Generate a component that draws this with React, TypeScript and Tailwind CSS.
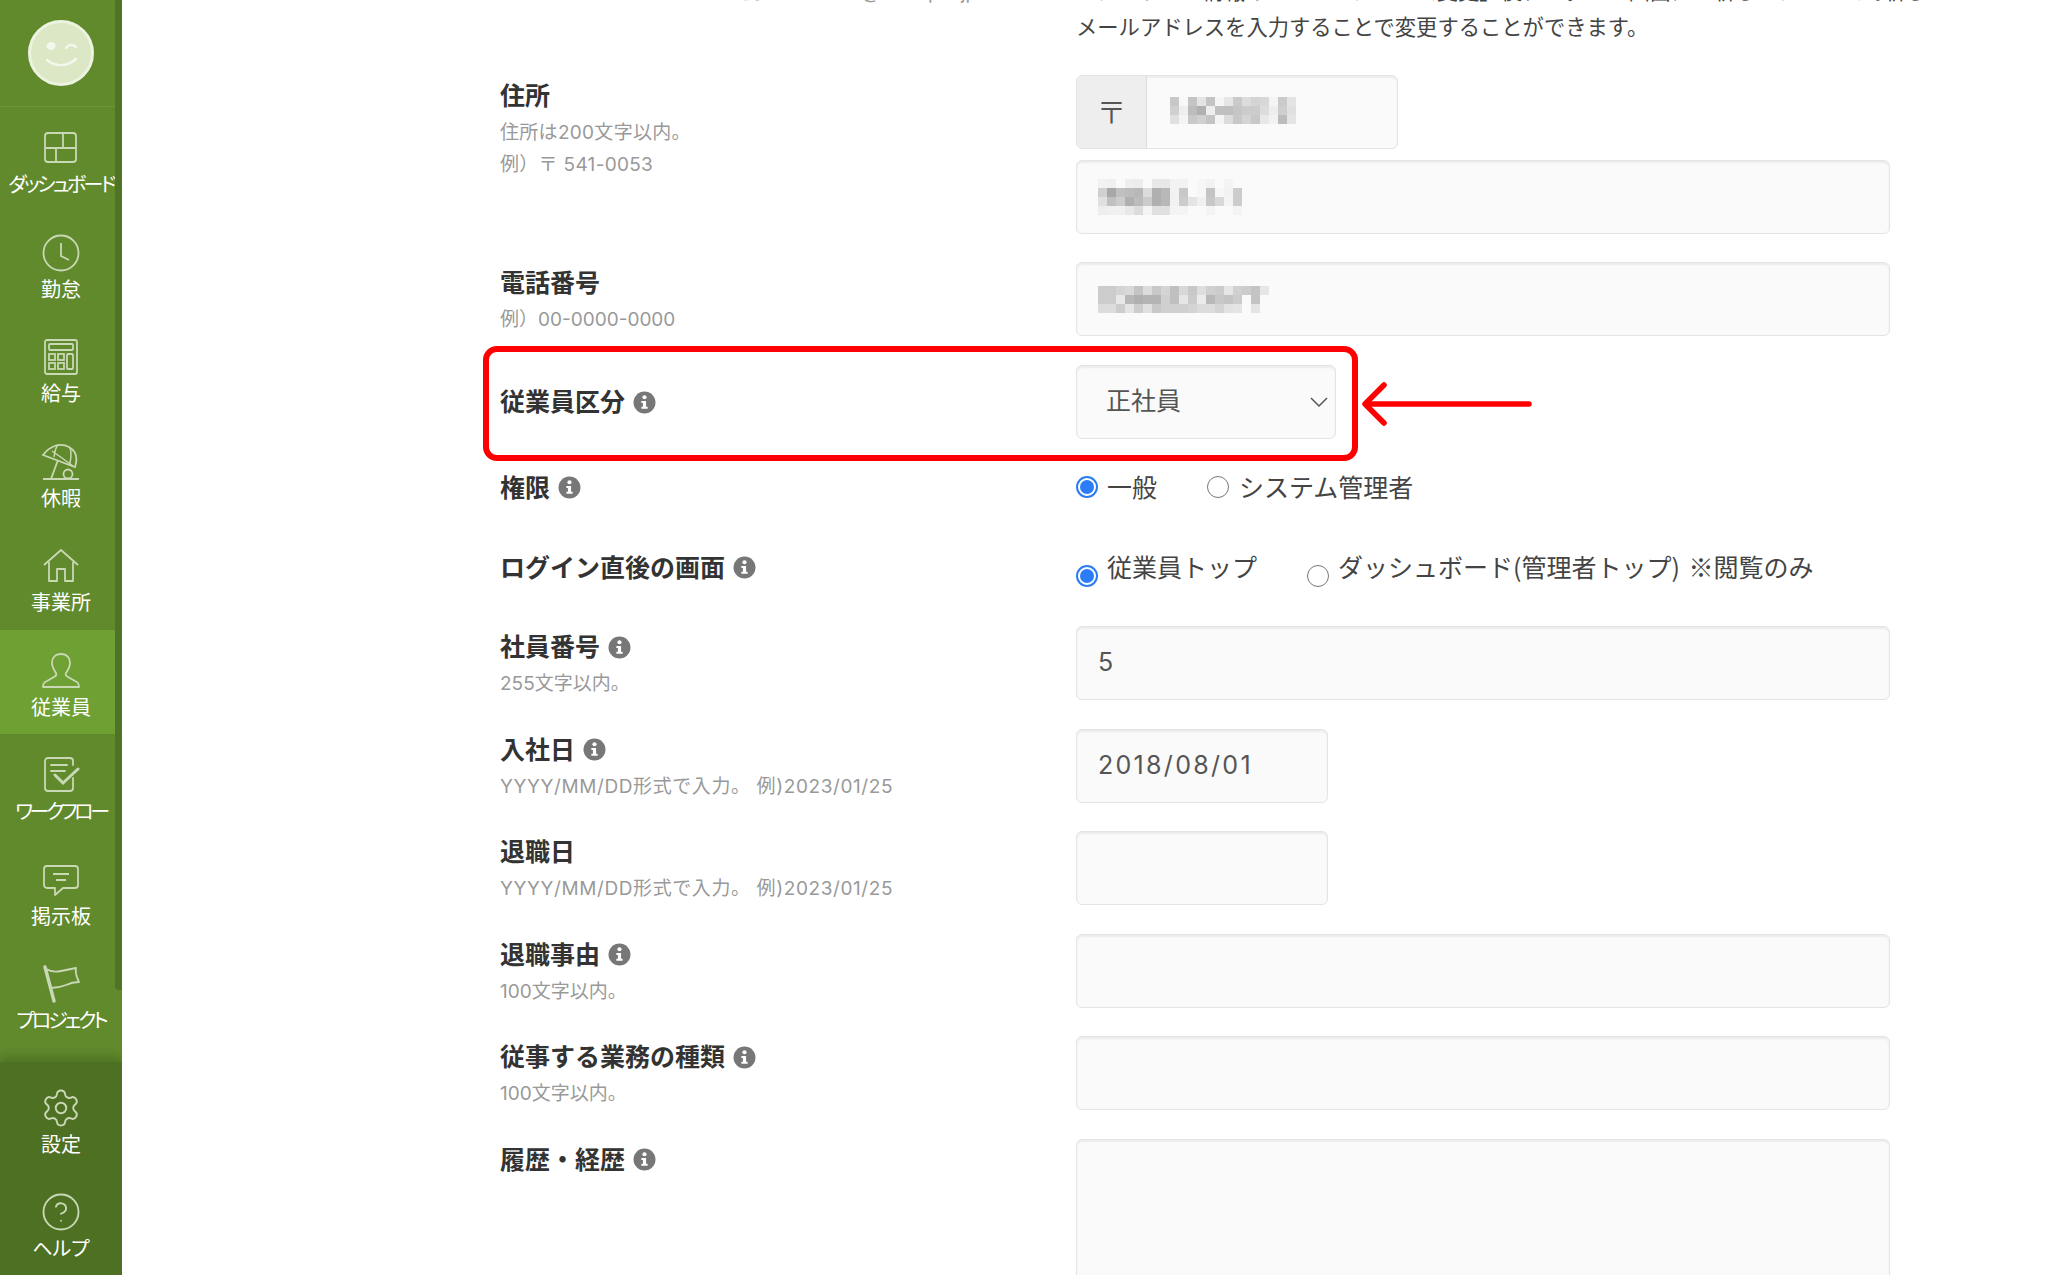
import React from "react";
import { Settings, CircleHelp } from "lucide-react";

const iconCls = "w-[38px] h-[38px] text-[#c9d8b5]";

const Dash = () => (
  <svg viewBox="0 0 38 38" className={iconCls} fill="none" stroke="currentColor" strokeWidth="1.8">
    <rect x="3" y="4" width="31" height="29" rx="3" />
    <path d="M3 19h31M21 4v15M14 19v14" />
  </svg>
);
const Clock = () => (
  <svg viewBox="0 0 38 38" className={iconCls} fill="none" stroke="currentColor" strokeWidth="1.8">
    <circle cx="19" cy="19" r="17.5" />
    <path d="M19 9v13l8 4" />
  </svg>
);
const Calc = () => (
  <svg viewBox="0 0 38 38" className={iconCls} fill="none" stroke="currentColor" strokeWidth="1.8">
    <rect x="3" y="2" width="32" height="34" rx="2" />
    <rect x="7" y="6" width="24" height="6" rx="1" />
    <rect x="7" y="16" width="6" height="6" />
    <rect x="16" y="16" width="6" height="6" />
    <rect x="7" y="25" width="6" height="6" />
    <rect x="16" y="25" width="6" height="6" />
    <rect x="25" y="16" width="6" height="15" rx="1" />
  </svg>
);
const Umbrella = () => (
  <svg viewBox="0 0 38 38" className={iconCls} fill="none" stroke="currentColor" strokeWidth="1.8">
    <path d="M1 12C8 3 18-1 27 4c7 4 9 11 6 20L1 12Z" />
    <path d="M10 8l10 7 11 8M16 2c-3 3-3 7-4 12M28 5c2 5 1 10 0 15" strokeWidth="1.5" />
    <path d="M16 17 9 36M1 36h36" />
    <circle cx="26" cy="31" r="4.5" />
  </svg>
);
const House = () => (
  <svg viewBox="0 0 38 38" className={iconCls} fill="none" stroke="currentColor" strokeWidth="1.8" strokeLinejoin="round">
    <path d="M2 18 19 3l17 15M7 15v19h8V22h8v12h8V15" />
  </svg>
);
const User = () => (
  <svg viewBox="0 0 38 38" className={iconCls} fill="none" stroke="currentColor" strokeWidth="1.8" strokeLinejoin="round">
    <path d="M19 2c-6 0-9 4-9 9 0 4 2 7 4 10 1 2 0 3-2 4l-7 4c-3 1-4 3-4 6h36c0-3-1-5-4-6l-7-4c-2-1-3-2-2-4 2-3 4-6 4-10 0-5-3-9-9-9Z" />
  </svg>
);
const Flow = () => (
  <svg viewBox="0 0 38 38" className={iconCls} fill="none" stroke="currentColor" strokeWidth="1.8" strokeLinecap="round">
    <path d="M31 22v10a3 3 0 0 1-3 3H6a3 3 0 0 1-3-3V5a3 3 0 0 1 3-3h22a3 3 0 0 1 3 3v4" />
    <path d="M9 9h16M9 15h14" />
    <path d="m13 19 8 8 15-14" strokeWidth="3" />
  </svg>
);
const Board = () => (
  <svg viewBox="0 0 38 38" className={iconCls} fill="none" stroke="currentColor" strokeWidth="1.8" strokeLinejoin="round">
    <path d="M5 5h28a3 3 0 0 1 3 3v16a3 3 0 0 1-3 3H21l-8 7v-7H5a3 3 0 0 1-3-3V8a3 3 0 0 1 3-3Z" />
    <path d="M11 13h16M14 19h10" />
  </svg>
);
const Flag = () => (
  <svg viewBox="0 0 38 38" className={iconCls} fill="none" stroke="currentColor" strokeWidth="1.8" strokeLinejoin="round">
    <path d="m12 36-9-34" strokeWidth="3.4" strokeLinecap="round" />
    <path d="M4 4c5 3 10 3 15 2 5-1 10-2 15-3-1 5 1 10 3 14-5 0-9 1-13 3-5 2-10 3-15 3" />
  </svg>
);
const Gear = () => <Settings className="w-[42px] h-[42px] text-[#c9d8b5]" strokeWidth={1.1} />;
const Help = () => <CircleHelp className="w-[42px] h-[42px] text-[#c9d8b5]" strokeWidth={1.05} />;

function NavItem({ icon, label, active, track }: { icon: React.ReactNode; label: string; active?: boolean; track?: string }) {
  return (
    <div className={`flex flex-col items-center h-[104.5px] pt-[22px] ${active ? "bg-[#6fa033]" : ""}`}>
      <div className="h-[38px] flex items-center justify-center">{icon}</div>
      <div className={`mt-[6px] text-[20px] leading-[24px] text-white whitespace-nowrap [font-feature-settings:'palt'] ${track ?? ""}`}>{label}</div>
    </div>
  );
}

function Sidebar() {
  return (
    <div className="relative w-[122px] h-[1275px] shrink-0 bg-[#618a2d] flex flex-col overflow-hidden">
      <div className="h-[107px] border-b border-[#6b9435] flex items-center justify-center">
        <svg viewBox="0 0 66 66" className="w-[66px] h-[66px]">
          <circle cx="33" cy="33" r="31.5" fill="#dce8c5" stroke="#edf3e1" strokeWidth="3" />
          <ellipse cx="23" cy="26" rx="4.5" ry="4" fill="#f4f8ec" />
          <path d="M38 28c3-4 7-4 10-1" fill="none" stroke="#f4f8ec" strokeWidth="2.4" strokeLinecap="round" />
          <path d="M19 40c8 7 20 7 29-1" fill="none" stroke="#f4f8ec" strokeWidth="2.4" strokeLinecap="round" />
        </svg>
      </div>
      <div className="flex flex-col">
        <NavItem icon={<Dash />} label="ダッシュボード" track="tracking-[-2.7px]" />
        <NavItem icon={<Clock />} label="勤怠" />
        <NavItem icon={<Calc />} label="給与" />
        <NavItem icon={<Umbrella />} label="休暇" />
        <NavItem icon={<House />} label="事業所" />
        <NavItem icon={<User />} label="従業員" active />
        <NavItem icon={<Flow />} label="ワークフロー" track="tracking-[-3.3px]" />
        <NavItem icon={<Board />} label="掲示板" />
        <NavItem icon={<Flag />} label="プロジェクト" track="tracking-[-3px]" />
      </div>
      <div className="absolute right-0 top-0 w-[7px] h-[990px] bg-[#507427] rounded-bl-[4px]" />
      <div className="absolute left-0 right-0 bottom-0 h-[213px] pt-[5px] flex flex-col bg-[#4d7023] shadow-[0_-6px_8px_rgba(50,80,20,0.35)]">
        <NavItem icon={<Gear />} label="設定" />
        <NavItem icon={<Help />} label="ヘルプ" />
      </div>
    </div>
  );
}

function Info() {
  return (
    <svg viewBox="0 0 22 22" className="w-[23px] h-[23px] inline-block shrink-0">
      <circle cx="11" cy="11" r="10.5" fill="#777" />
      <circle cx="11" cy="6" r="2" fill="#fff" />
      <path d="M8 9.5h4.5V15H14v2H8v-2h1.5v-3.5H8z" fill="#fff" />
    </svg>
  );
}

function Mosaic({ rows }: { rows: string[][] }) {
  const cell = 9;
  return (
    <svg width={rows[0].length * cell} height={rows.length * cell} shapeRendering="crispEdges" className="block">
      {rows.map((r, y) =>
        r.map((c, x) => <rect key={x + "-" + y} x={x * cell} y={y * cell} width={cell} height={cell} fill={`#${c}${c}${c}`} />)
      )}
    </svg>
  );
}
const toRows = (s: string) => s.split("|").map((r) => r.split(","));

const inputCls =
  "flex items-center h-[74px] rounded-[6px] border border-[#e4e4e4] bg-[#fafafa] shadow-[inset_0_2px_2px_rgba(0,0,0,0.06)] text-[25px] tracking-[2.3px] text-[#555]";

function Label({ text, info, subs, tracks }: { text: string; info?: boolean; subs?: string[]; tracks?: string }) {
  return (
    <div className="w-[576px] shrink-0 pt-[3px]">
      <div className="flex items-center gap-[8px] text-[25px] leading-[36px] font-bold text-[#333]">
        <span>{text}</span>
        {info && <Info />}
      </div>
      {subs && (
        <div className="mt-[3px]">
          {subs.map((s) => (
            <div key={s} className={`text-[19px] leading-[32px] text-[#999] whitespace-nowrap ${tracks ?? ""}`}>{s}</div>
          ))}
        </div>
      )}
    </div>
  );
}

function Radio({ on, className }: { on?: boolean; className?: string }) {
  return (
    <span className={`w-[22px] h-[22px] shrink-0 rounded-full flex items-center justify-center border ${on ? "border-[#2b7cf6] border-2" : "border-[#777]"} ${className ?? ""}`}>
      {on && <span className="w-[14px] h-[14px] rounded-full bg-[#2b7cf6]" />}
    </span>
  );
}

function Field({ text, info, subs, width, value, tracks }: { text: string; info?: boolean; subs?: string[]; width: string; value?: string; tracks?: string }) {
  return (
    <div className="flex mb-[28.5px]">
      <Label text={text} info={info} subs={subs} tracks={tracks} />
      <div className={`${inputCls} ${width} pl-[21px]`}>{value}</div>
    </div>
  );
}

export default function App() {
  return (
    <div className="flex w-[2048px] h-[1275px] overflow-hidden bg-white [font-family:'Inter','Noto_Sans_CJK_JP','Liberation_Sans',sans-serif]">
      <Sidebar />
      <main className="relative flex-1 pl-[378px] overflow-hidden">
        <div className="flex -mt-[27px] mb-[30px]">
          <div className="w-[576px] shrink-0 pl-[90px] pt-[4px] text-[19px] leading-[31px] text-[#999] whitespace-nowrap">メールアドレス。例）　　 email@example.jp</div>
          <div className="w-[814px] text-[21.3px] leading-[36px] text-[#444] whitespace-nowrap">
            <div className="pl-[20px]">アカウント情報の「メールアドレス変更」後、ログイン画面にて新しいアドレスで新しい</div>
            <div>メールアドレスを入力することで変更することができます。</div>
          </div>
        </div>

        <div className="flex mb-[28px]">
          <Label text="住所" subs={["住所は200文字以内。", "例）〒 541-0053"]} tracks="tracking-[0.3px]" />
          <div className="w-[814px]">
            <div className={`${inputCls} w-[322px] mb-[11px] overflow-hidden`}>
              <div className="w-[70px] h-full flex items-center justify-center bg-[#eeeeee] border-r border-[#dcdcdc] text-[#555] text-[30px] font-light tracking-normal">〒</div>
              <div className="pl-[23px] -mt-[3px]">
                <Mosaic rows={toRows("c8,f8,c4,e4,c4,f6,e6,ca,dc,d4,d8,f4,ca,e4|d0,ee,bc,b0,ee,c0,c0,c6,cc,cc,dc,ee,ce,e0|e0,f4,c8,d0,c4,f4,dc,c8,d4,c8,e8,f2,bc,e4")} />
              </div>
            </div>
            <div className={`${inputCls} pl-[21px]`}>
              <Mosaic rows={toRows("f2,f0,fa,ee,ec,fa,e8,e8,f2,f2,fa,f6,f2,fa,f4,fa|d0,a8,c0,bc,b8,dc,b0,b8,f2,c8,fa,f6,c4,f6,f2,cc|e0,c0,cc,b0,bc,cc,b0,b8,f2,cc,e4,f0,c8,d8,f4,cc|ee,f0,f0,e8,dc,f4,e0,e0,f4,f4,fa,fa,f4,fa,fa,f4")} />
            </div>
          </div>
        </div>

        <div className="flex mb-[29px]">
          <Label text="電話番号" subs={["例）00-0000-0000"]} />
          <div className={`${inputCls} w-[814px] pl-[21px]`}>
            <Mosaic rows={toRows("cc,cc,d4,d8,c4,dc,c8,d4,c0,d8,c8,de,d0,cc,e6,d0,cc,c4,e6|cc,cc,e8,b8,b0,b4,b4,d0,c0,e6,cc,ec,b8,c8,c4,cc,fa,c4,fa|dc,dc,cc,e4,cc,e0,c8,d0,d0,d0,d4,dc,dc,d4,e2,e4,fa,e4,fa")} />
          </div>
        </div>

        <div className="flex items-center mb-[30.5px]">
          <div className="w-[576px] shrink-0 flex items-center gap-[8px] text-[25px] leading-[36px] font-bold text-[#333]">
            <span>従業員区分</span>
            <Info />
          </div>
          <div className={`${inputCls} w-[260px] pl-[29px] pr-[6px] justify-between tracking-normal`}>
            <span>正社員</span>
            <svg viewBox="0 0 20 12" className="w-[20px] h-[12px]" fill="none" stroke="#555" strokeWidth="1.5">
              <path d="m2 2 8 8 8-8" />
            </svg>
          </div>
        </div>

        <div className="flex mb-[43px]">
          <div className="w-[576px] shrink-0 flex items-center gap-[8px] text-[25px] leading-[36px] font-bold text-[#333]">
            <span>権限</span>
            <Info />
          </div>
          <div className="flex items-center text-[25px] leading-[36px] text-[#444]">
            <Radio on className="-mt-[2px]" />
            <span className="ml-[9px]">一般</span>
            <Radio className="ml-[50px] -mt-[2px]" />
            <span className="ml-[10px]">システム管理者</span>
          </div>
        </div>

        <div className="flex mb-[39.5px]">
          <div className="w-[576px] shrink-0 flex items-center gap-[8px] text-[25px] leading-[36px] font-bold text-[#333]">
            <span>ログイン直後の画面</span>
            <Info />
          </div>
          <div className="flex items-center text-[25px] leading-[36px] text-[#444] whitespace-nowrap">
            <Radio on className="mt-[16px]" />
            <span className="ml-[9px]">従業員トップ</span>
            <Radio className="ml-[50px] mt-[16px]" />
            <span className="ml-[9px] -translate-y-[2px] [font-family:'Noto_Sans_CJK_JP',sans-serif]">ダッシュボード(管理者トップ) <span className="ml-[3px]">※閲覧のみ</span></span>
          </div>
        </div>

        <Field text="社員番号" info subs={["255文字以内。"]} width="w-[814px]" value="5" />
        <Field text="入社日" info subs={["YYYY/MM/DD形式で入力。 例)2023/01/25"]} tracks="tracking-[0.6px]" width="w-[252px]" value="2018/08/01" />
        <Field text="退職日" subs={["YYYY/MM/DD形式で入力。 例)2023/01/25"]} tracks="tracking-[0.6px]" width="w-[252px]" />
        <Field text="退職事由" info subs={["100文字以内。"]} width="w-[814px]" />
        <Field text="従事する業務の種類" info subs={["100文字以内。"]} width="w-[814px]" />
        <div className="flex">
          <Label text="履歴・経歴" info />
          <div className={`${inputCls} w-[814px] h-[240px]`} />
        </div>

        <div className="absolute left-[361px] top-[346px] w-[875px] h-[115px] rounded-[14px] border-[6px] border-[#ff0000] pointer-events-none" />
        <svg className="absolute left-[1238px] top-[379px] pointer-events-none" width="176" height="50" viewBox="0 0 176 50" fill="none" stroke="#ff0000" strokeLinecap="round" strokeLinejoin="round">
          <path d="M6 25h163" strokeWidth="5.5" />
          <path d="M24 6 5 25l19 19" strokeWidth="5.5" />
        </svg>
      </main>
    </div>
  );
}
